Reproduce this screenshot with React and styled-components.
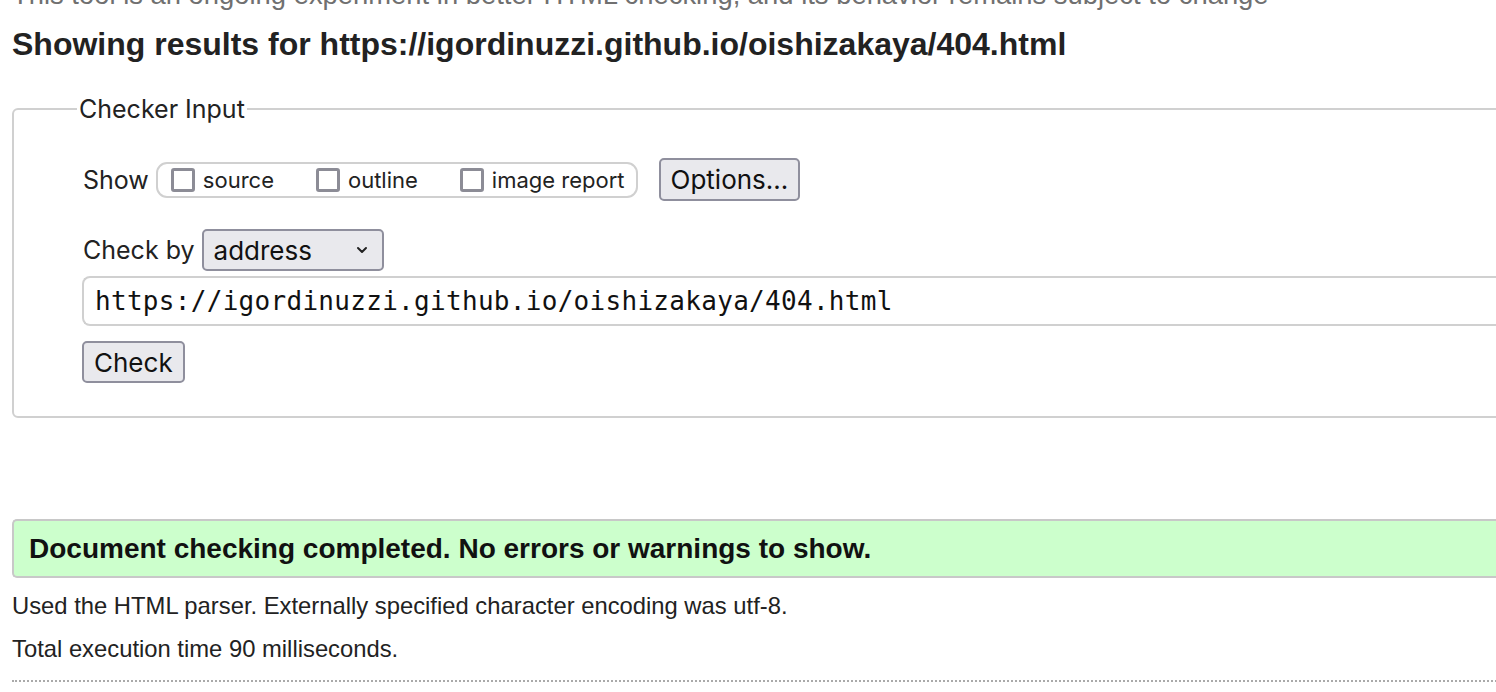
import React from 'react';
import styled, { createGlobalStyle } from 'styled-components';

const GlobalStyle = createGlobalStyle`
  html, body {
    margin: 0;
    padding: 0;
    background: #fff;
    overflow: hidden;
  }
  body {
    font-family: "Liberation Sans", Arial, sans-serif;
    color: #222;
  }
`;

const Page = styled.div`
  width: 1620px;
  padding-left: 12px;
  box-sizing: border-box;
`;

const Intro = styled.p`
  margin: -20px 0 0 0;
  font-size: 27.4px;
  line-height: 30px;
  color: #707070;
  white-space: nowrap;
`;

const Heading = styled.h2`
  margin: 16px 0 0 0;
  font-size: 32px;
  line-height: 36px;
  font-weight: bold;
  color: #222;
`;

const Fieldset = styled.fieldset`
  margin: 32px 0 0 0;
  padding: 14px 0 33px 68px;
  border: 2px solid #d0d0d0;
  border-radius: 6px;
  font-family: Inter, "Liberation Sans", sans-serif;
`;

const Legend = styled.legend`
  margin-left: -5px;
  padding: 0 2px;
  font-size: 25px;
  line-height: 30px;
  color: #222;
`;

const Row = styled.div`
  display: flex;
  align-items: center;
  gap: ${p => p.$gap || 10}px;
  margin-top: ${p => p.$top || 0}px;
`;

const Label = styled.span`
  font-size: 25px;
  color: #222;
  margin-left: 1px;
`;

const Group = styled.div`
  display: flex;
  align-items: center;
  box-sizing: border-box;
  height: 36px;
  padding: 0 11px 0 13px;
  border: 2px solid #d0d0d0;
  border-radius: 11px;
`;

const CheckItem = styled.label`
  display: flex;
  align-items: center;
  gap: 8px;
  font-size: 22px;
  color: #222;
  margin-right: ${p => (p.$last ? 0 : 42)}px;
`;

const Box = styled.span`
  display: inline-block;
  width: 24px;
  height: 24px;
  box-sizing: border-box;
  border: 3px solid #8c8c96;
  border-radius: 3px;
  background: #fff;
`;

const Button = styled.button`
  font-family: Inter, "Liberation Sans", sans-serif;
  font-size: 26px;
  color: #111;
  background: #e9e9ed;
  border: 2px solid #8f8f9d;
  border-radius: 5px;
  padding: 0 10px;
  height: ${p => p.$h || 43}px;
  margin-left: ${p => p.$ml || 0}px;
`;

const Select = styled.div`
  display: flex;
  align-items: center;
  justify-content: space-between;
  box-sizing: border-box;
  width: 182px;
  height: 42px;
  padding: 0 13px 0 10px;
  background: #e9e9ed;
  border: 2px solid #8f8f9d;
  border-radius: 5px;
  font-size: 26px;
  color: #111;
`;

const UrlInput = styled.div`
  box-sizing: border-box;
  height: 50px;
  margin-top: 5px;
  padding: 0 11px;
  display: flex;
  align-items: center;
  border: 2px solid #d0d0d0;
  border-right: none;
  border-radius: 8px 0 0 8px;
  font-family: "DejaVu Sans Mono", "Liberation Mono", monospace;
  font-size: 26px;
  color: #111;
  letter-spacing: 0.3px;
`;

const Success = styled.div`
  margin-top: 101px;
  height: 59px;
  box-sizing: border-box;
  display: flex;
  align-items: center;
  padding-left: 15px;
  background: #ccffcc;
  border: 2px solid #c8c8c8;
  border-right: none;
  border-radius: 5px 0 0 5px;
  font-size: 28px;
  font-weight: bold;
  color: #111;
`;

const Details = styled.p`
  margin: ${p => p.$top}px 0 0 0;
  font-size: 23.8px;
  line-height: 28px;
  color: #222;
`;

const Dotted = styled.hr`
  margin: 17px 0 0 0;
  border: none;
  border-top: 2px dotted #aaa;
`;

const Chevron = () => (
  <svg width="14" height="10" viewBox="0 0 14 10">
    <path d="M3 3 L7 7 L11 3" fill="none" stroke="#222" strokeWidth="2" strokeLinecap="round" strokeLinejoin="round" />
  </svg>
);

export default function App() {
  return (
    <Page>
      <GlobalStyle />
      <Intro>This tool is an ongoing experiment in better HTML checking, and its behavior remains subject to change</Intro>
      <Heading>Showing results for https://igordinuzzi.github.io/oishizakaya/404.html</Heading>

      <Fieldset>
        <Legend>Checker Input</Legend>
        <Row $top={20} $gap={7}>
          <Label>Show</Label>
          <Group>
            <CheckItem><Box />source</CheckItem>
            <CheckItem><Box />outline</CheckItem>
            <CheckItem $last><Box />image report</CheckItem>
          </Group>
          <Button $ml={14}>Options...</Button>
        </Row>
        <Row $top={28} $gap={7}>
          <Label>Check by</Label>
          <Select>address<Chevron /></Select>
        </Row>
        <UrlInput>https://igordinuzzi.github.io/oishizakaya/404.html</UrlInput>
        <Row $top={15}>
          <Button $h={42}>Check</Button>
        </Row>
      </Fieldset>

      <Success>Document checking completed. No errors or warnings to show.</Success>
      <Details $top={14}>Used the HTML parser. Externally specified character encoding was utf-8.</Details>
      <Details $top={15}>Total execution time 90 milliseconds.</Details>
      <Dotted />
    </Page>
  );
}
